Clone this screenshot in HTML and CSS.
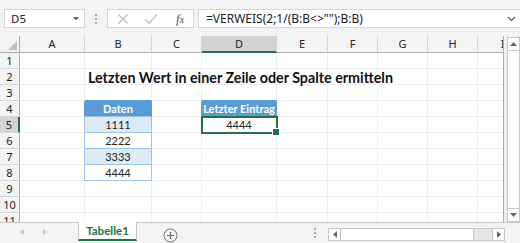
FILE: index.html
```html
<!DOCTYPE html>
<html lang="de">
<head>
<meta charset="utf-8">
<title>Tabelle1</title>
<link rel="stylesheet" href="styles.css">
</head>
<body>
<div class="toolbar">
  <div class="namebox"><span>D5</span><svg width="6" height="4" viewBox="0 0 6 4"><path d="M0 0H6L3 3.5Z" fill="#666"/></svg></div>
  <div class="dots"><i></i><i></i><i></i></div>
  <div class="fbtns">
    <svg class="ico" width="12" height="12" viewBox="0 0 12 12"><path d="M1.5 1.5L10.5 10.5M10.5 1.5L1.5 10.5" stroke="#BDBDBD" stroke-width="1.2" fill="none"/></svg>
    <svg class="ico" width="14" height="12" viewBox="0 0 14 12"><path d="M1 6.5L5 10.5L13 1.5" stroke="#BDBDBD" stroke-width="1.2" fill="none"/></svg>
    <span class="fx">f<span class="fxs">x</span></span>
  </div>
  <div class="formula"><span>=VERWEIS(2;1/(B:B&lt;&gt;"");B:B)</span><svg width="9" height="6" viewBox="0 0 9 6"><path d="M1 1L4.5 4.5L8 1" stroke="#555" stroke-width="1.2" fill="none"/></svg></div>
</div>
<div class="sheet">
  <div class="grid">
    <div class="corner"><svg width="9" height="9" viewBox="0 0 9 9"><path d="M9 0V9H0Z" fill="#BFBFBF"/></svg></div>
    <div class="ch">A</div><div class="ch">B</div><div class="ch">C</div><div class="ch sel">D</div><div class="ch">E</div><div class="ch">F</div><div class="ch">G</div><div class="ch">H</div><div class="ch">I</div>

    <div class="rh">1</div><div class="c"></div><div class="c"></div><div class="c"></div><div class="c"></div><div class="c"></div><div class="c"></div><div class="c"></div><div class="c"></div><div class="c"></div>

    <div class="rh">2</div><div class="c"></div><div class="c title"><span>Letzten Wert in einer Zeile oder Spalte ermitteln</span></div><div class="c"></div><div class="c"></div><div class="c"></div><div class="c"></div><div class="c"></div><div class="c"></div><div class="c"></div>

    <div class="rh">3</div><div class="c"></div><div class="c bb"></div><div class="c"></div><div class="c bb"></div><div class="c"></div><div class="c"></div><div class="c"></div><div class="c"></div><div class="c"></div>

    <div class="rh">4</div><div class="c br"></div><div class="c th">Daten</div><div class="c br"></div><div class="c th">Letzter Eintrag</div><div class="c"></div><div class="c"></div><div class="c"></div><div class="c"></div><div class="c"></div>

    <div class="rh rsel">5</div><div class="c brl"></div><div class="c tl">1111</div><div class="c"></div><div class="c active">4444</div><div class="c"></div><div class="c"></div><div class="c"></div><div class="c"></div><div class="c"></div>

    <div class="rh">6</div><div class="c brl"></div><div class="c tw">2222</div><div class="c"></div><div class="c"></div><div class="c"></div><div class="c"></div><div class="c"></div><div class="c"></div><div class="c"></div>

    <div class="rh">7</div><div class="c brl"></div><div class="c tl">3333</div><div class="c"></div><div class="c"></div><div class="c"></div><div class="c"></div><div class="c"></div><div class="c"></div><div class="c"></div>

    <div class="rh">8</div><div class="c brl"></div><div class="c tw">4444</div><div class="c"></div><div class="c"></div><div class="c"></div><div class="c"></div><div class="c"></div><div class="c"></div><div class="c"></div>

    <div class="rh">9</div><div class="c"></div><div class="c"></div><div class="c"></div><div class="c"></div><div class="c"></div><div class="c"></div><div class="c"></div><div class="c"></div><div class="c"></div>

    <div class="rh">10</div><div class="c"></div><div class="c"></div><div class="c"></div><div class="c"></div><div class="c"></div><div class="c"></div><div class="c"></div><div class="c"></div><div class="c"></div>

    <div class="rh">11</div><div class="c"></div><div class="c"></div><div class="c"></div><div class="c"></div><div class="c"></div><div class="c"></div><div class="c"></div><div class="c"></div><div class="c"></div>
  </div>
  <div class="vscroll">
    <div class="vbtn"><svg width="7" height="4" viewBox="0 0 7 4"><path d="M0 4H7L3.5 0Z" fill="#666"/></svg></div>
    <div class="vthumb"></div>
    <div class="vbtn"><svg width="7" height="4" viewBox="0 0 7 4"><path d="M0 0H7L3.5 4Z" fill="#666"/></svg></div>
  </div>
</div>
<div class="tabs">
  <div class="navs">
    <svg width="4" height="6" viewBox="0 0 4 6"><path d="M4 0V6L0 3Z" fill="#C8C8C8"/></svg>
    <svg width="4" height="6" viewBox="0 0 4 6"><path d="M0 0V6L4 3Z" fill="#C8C8C8"/></svg>
  </div>
  <div class="tab">Tabelle1</div>
  <div class="add"><svg width="15" height="15" viewBox="0 0 15 15"><circle cx="7.5" cy="7.5" r="6.5" stroke="#777" stroke-width="1" fill="none"/><path d="M7.5 4V11M4 7.5H11" stroke="#666" stroke-width="1.2"/></svg></div>
  <div class="hsplit"><i></i><i></i><i></i></div>
  <div class="hscroll">
    <div class="hbtn"><svg width="4" height="7" viewBox="0 0 4 7"><path d="M4 0V7L0 3.5Z" fill="#666"/></svg></div>
    <div class="hthumb"></div>
    <div class="htrack"></div>
    <div class="hbtn"><svg width="4" height="7" viewBox="0 0 4 7"><path d="M0 0V7L4 3.5Z" fill="#666"/></svg></div>
  </div>
</div>
</body>
</html>
```
FILE: styles.css
```css
* { box-sizing: border-box; }
body {
  margin: 0;
  width: 520px;
  height: 243px;
  overflow: hidden;
  background: #F3F3F3;
  font-family: "Noto Sans", "Open Sans", sans-serif;
  color: #222;
}
.toolbar {
  height: 36px;
  display: flex;
  align-items: flex-start;
  padding-top: 9px;
}
.namebox {
  margin-left: 4px;
  width: 81px;
  height: 19px;
  background: #fff;
  border: 1px solid #D6D6D6;
  display: flex;
  align-items: center;
  justify-content: space-between;
  padding: 0 5px 0 6px;
  font-size: 11.5px;
}
.dots {
  width: 22px;
  height: 19px;
  display: flex;
  flex-direction: column;
  align-items: center;
  justify-content: center;
  gap: 2px;
}
.dots i, .hsplit i {
  display: block;
  width: 2px;
  height: 2px;
  background: #A6A6A6;
}
.fbtns {
  width: 87px;
  height: 19px;
  background: #fff;
  border: 1px solid #D6D6D6;
  display: flex;
  align-items: center;
  padding-left: 9px;
  gap: 15px;
}
.fx {
  font-family: "Liberation Serif", serif;
  font-style: italic;
  font-size: 13px;
  color: #555;
  margin-left: 3px;
  line-height: 1;
}
.fxs { font-size: 10px; }
.formula {
  flex: 1;
  margin-left: 4px;
  height: 19px;
  background: #fff;
  border: 1px solid #D6D6D6;
  border-right: none;
  display: flex;
  align-items: center;
  justify-content: space-between;
  padding: 0 4px 0 7px;
  font-size: 12px;
}
.sheet {
  height: 186px;
  display: flex;
  background: #fff;
  overflow: hidden;
}
.grid {
  width: 503px;
  flex: none;
  overflow: hidden;
  display: grid;
  grid-template-columns: 20px 65px 67px 50px 75px 51px 50px 50px 50px 50px;
  grid-template-rows: 17px repeat(11, 16px);
}
.corner {
  background: #F3F3F3;
  border-right: 1px solid #ABABAB;
  border-bottom: 1px solid #ABABAB;
  display: flex;
  align-items: flex-end;
  justify-content: flex-end;
  padding: 0 2px 2px 0;
}
.ch {
  background: #F3F3F3;
  border-right: 1px solid #D6D6D6;
  border-bottom: 1px solid #ABABAB;
  font-size: 11px;
  line-height: 16px;
  text-align: center;
  color: #222;
}
.ch.sel {
  background: #D3D3D3;
  border-bottom: 2px solid #217346;
}
.rh {
  background: #F3F3F3;
  border-right: 1px solid #ABABAB;
  border-bottom: 1px solid #D6D6D6;
  font-size: 11px;
  line-height: 16px;
  text-align: center;
}
.rh.rsel {
  background: #D3D3D3;
  border-right: 2px solid #217346;
}
.c {
  border-right: 1px solid #EFEFEF;
  border-bottom: 1px solid #EFEFEF;
  font-family: Lato, "Liberation Sans", sans-serif;
  font-size: 11px;
  line-height: 15px;
  text-align: center;
  white-space: nowrap;
}
.title {
  position: relative;
  z-index: 1;
  text-align: left;
  overflow: visible;
  padding-left: 3px;
  font-weight: bold;
  font-size: 14.3px;
  line-height: 18px;
  color: #111;
}
.bb { border-bottom-color: #5B9BD5; }
.br { border-right-color: #5B9BD5; }
.brl { border-right-color: #9BC2E6; }
.th {
  background: #5B9BD5;
  color: #fff;
  font-weight: bold;
  border-right-color: #5B9BD5;
  border-bottom-color: #9BC2E6;
}
.tl {
  background: #DDEBF7;
  border-color: #9BC2E6;
}
.tw { border-color: #9BC2E6; }
.active {
  position: relative;
  outline: 2px solid #217346;
  outline-offset: -1px;
}
.active::after {
  content: "";
  position: absolute;
  right: -4px;
  bottom: -4px;
  width: 6px;
  height: 6px;
  background: #217346;
  border: 1px solid #fff;
}
.vscroll {
  flex: 1;
  border-left: 1px solid #ABABAB;
  background: #F0F0F0;
  display: flex;
  flex-direction: column;
  padding: 1px 0 0 3px;
}
.vbtn {
  height: 14px;
  background: #fff;
  border: 1px solid #C6C6C6;
  display: flex;
  align-items: center;
  justify-content: center;
}
.vthumb {
  flex: 1;
  background: #fff;
  border-left: 1px solid #C6C6C6;
  border-right: 1px solid #C6C6C6;
}
.tabs {
  height: 21px;
  display: flex;
  align-items: flex-start;
  border-top: 1px solid #C6C6C6;
  background: #F3F3F3;
}
.navs {
  width: 78px;
  display: flex;
  gap: 19px;
  padding: 6px 0 0 20px;
}
.tab {
  width: 59px;
  height: 19px;
  margin-top: -1px;
  background: #fff;
  border-left: 1px solid #C6C6C6;
  border-right: 1px solid #C6C6C6;
  border-bottom: 2px solid #217346;
  color: #217346;
  font-family: Lato, "Liberation Sans", sans-serif;
  font-weight: bold;
  font-size: 11.5px;
  line-height: 18px;
  text-align: center;
}
.add {
  margin-left: 26px;
  padding-top: 3px;
}
.hsplit {
  margin-left: 136px;
  padding-top: 5px;
  display: flex;
  flex-direction: column;
  gap: 2px;
}
.hscroll {
  margin-left: 12px;
  margin-top: 5px;
  width: 177px;
  height: 13px;
  display: flex;
  border: 1px solid #C6C6C6;
  background: #fff;
}
.hbtn {
  width: 11px;
  display: flex;
  align-items: center;
  justify-content: center;
}
.hthumb {
  width: 134px;
  border-left: 1px solid #C6C6C6;
  border-right: 1px solid #C6C6C6;
}
.htrack {
  flex: 1;
  background: #E6E6E6;
  border-right: 1px solid #C6C6C6;
}
```
